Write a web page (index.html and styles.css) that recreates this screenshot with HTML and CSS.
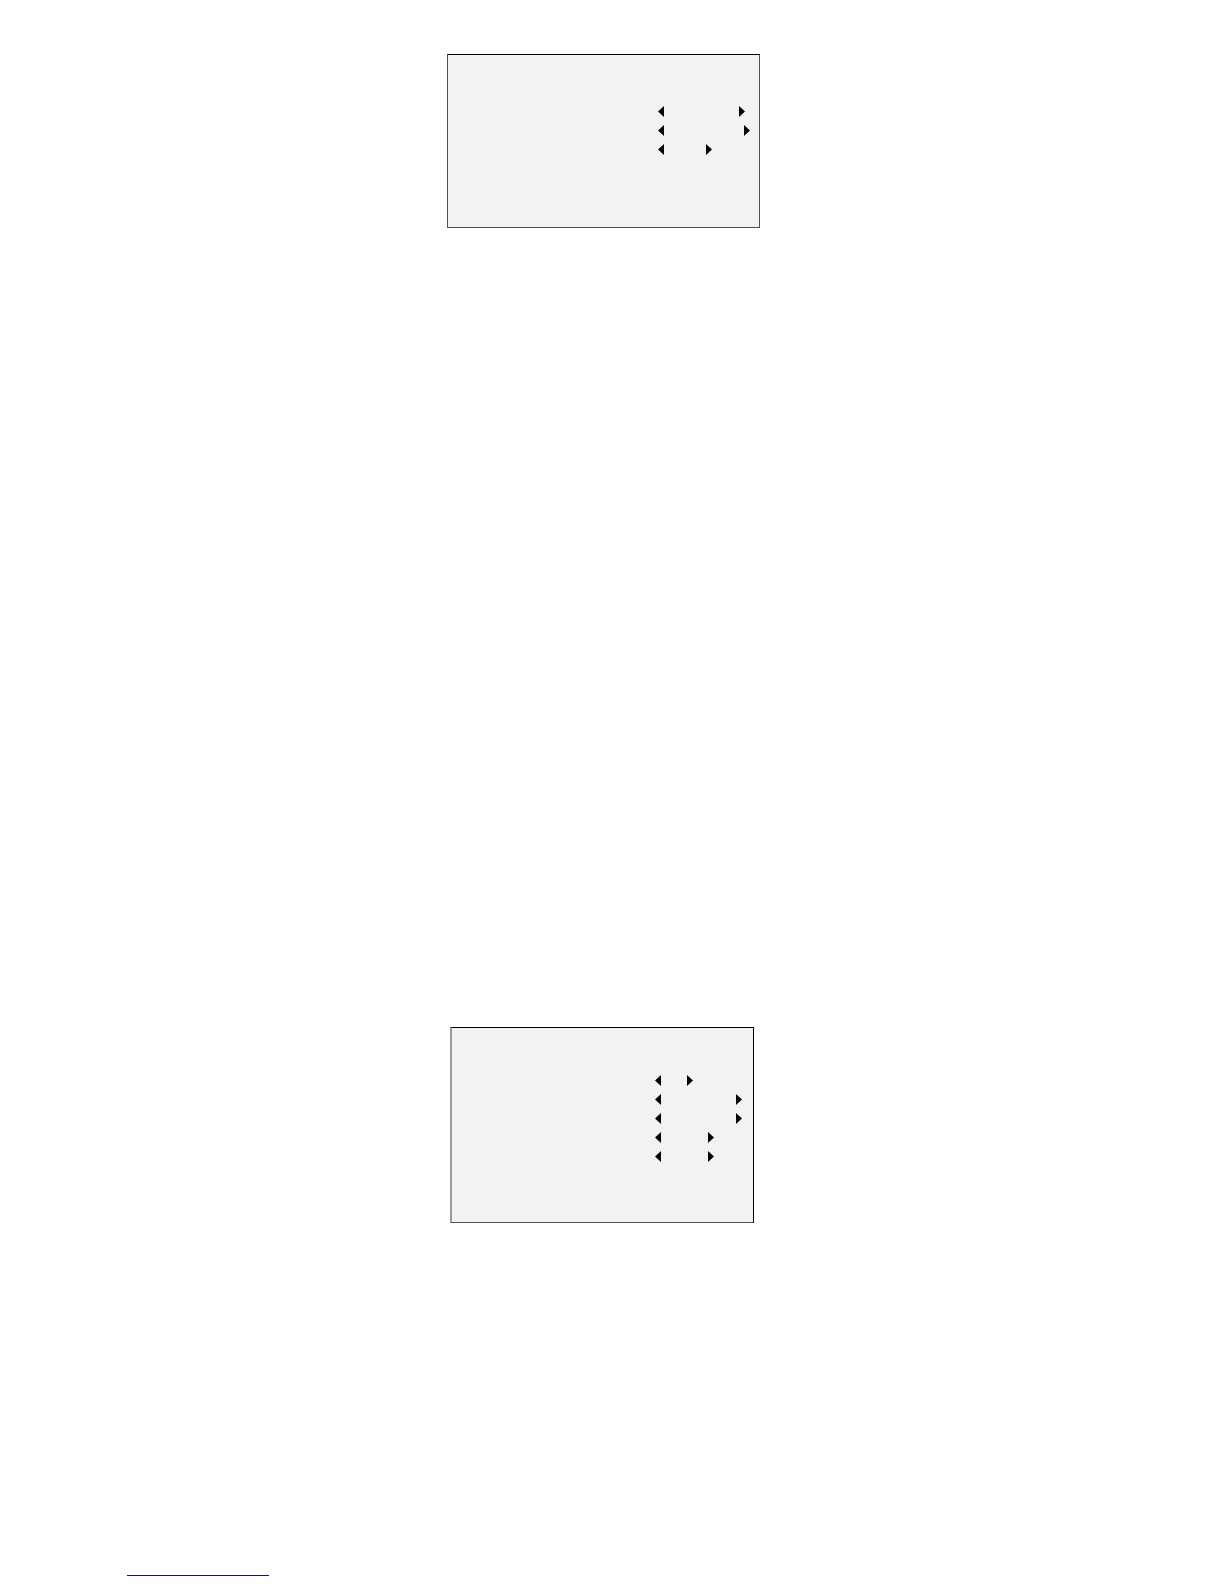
FILE: index.html
```
<!DOCTYPE html>
<html lang="en">
<head>
  <meta charset="UTF-8" />
  <meta name="viewport" content="width=device-width, initial-scale=1.0"/>
  <title>Menu</title>
  <link rel="stylesheet" href="styles.css">
</head>
<body>

  <main class="page">
    <section class="panel-row">
      <div class="panel panel-short">
        <div class="option option-long">
          <button type="button" class="arrow" aria-label="Previous"><svg viewBox="0 0 6 11"><path d="M6 0v11L0 5.5z"/></svg></button>
          <button type="button" class="arrow" aria-label="Next"><svg viewBox="0 0 6 11"><path d="M0 0v11l6-5.5z"/></svg></button>
        </div>
        <div class="option option-longest">
          <button type="button" class="arrow" aria-label="Previous"><svg viewBox="0 0 6 11"><path d="M6 0v11L0 5.5z"/></svg></button>
          <button type="button" class="arrow" aria-label="Next"><svg viewBox="0 0 6 11"><path d="M0 0v11l6-5.5z"/></svg></button>
        </div>
        <div class="option option-medium">
          <button type="button" class="arrow" aria-label="Previous"><svg viewBox="0 0 6 11"><path d="M6 0v11L0 5.5z"/></svg></button>
          <button type="button" class="arrow" aria-label="Next"><svg viewBox="0 0 6 11"><path d="M0 0v11l6-5.5z"/></svg></button>
        </div>
      </div>
    </section>

    <section class="panel-row panel-row-lower">
      <div class="panel panel-tall">
        <div class="option option-small">
          <button type="button" class="arrow" aria-label="Previous"><svg viewBox="0 0 6 11"><path d="M6 0v11L0 5.5z"/></svg></button>
          <button type="button" class="arrow" aria-label="Next"><svg viewBox="0 0 6 11"><path d="M0 0v11l6-5.5z"/></svg></button>
        </div>
        <div class="option option-long">
          <button type="button" class="arrow" aria-label="Previous"><svg viewBox="0 0 6 11"><path d="M6 0v11L0 5.5z"/></svg></button>
          <button type="button" class="arrow" aria-label="Next"><svg viewBox="0 0 6 11"><path d="M0 0v11l6-5.5z"/></svg></button>
        </div>
        <div class="option option-long">
          <button type="button" class="arrow" aria-label="Previous"><svg viewBox="0 0 6 11"><path d="M6 0v11L0 5.5z"/></svg></button>
          <button type="button" class="arrow" aria-label="Next"><svg viewBox="0 0 6 11"><path d="M0 0v11l6-5.5z"/></svg></button>
        </div>
        <div class="option option-wide">
          <button type="button" class="arrow" aria-label="Previous"><svg viewBox="0 0 6 11"><path d="M6 0v11L0 5.5z"/></svg></button>
          <button type="button" class="arrow" aria-label="Next"><svg viewBox="0 0 6 11"><path d="M0 0v11l6-5.5z"/></svg></button>
        </div>
        <div class="option option-wide">
          <button type="button" class="arrow" aria-label="Previous"><svg viewBox="0 0 6 11"><path d="M6 0v11L0 5.5z"/></svg></button>
          <button type="button" class="arrow" aria-label="Next"><svg viewBox="0 0 6 11"><path d="M0 0v11l6-5.5z"/></svg></button>
        </div>
      </div>
    </section>

    <a class="footer-link" href="#" aria-label="Website"></a>
  </main>

</body>
</html>
```
FILE: styles.css
```
* {
  margin: 0; padding: 0; box-sizing: border-box;
  font-family: "Liberation Sans", sans-serif;
}
body {
  background: #fff;
}
.page {
  display: flex;
  flex-direction: column;
  min-height: 100vh;
  padding: 54px 144px 8px 127px;
}
.panel-row {
  display: flex;
  justify-content: center;
}
.panel-row-lower {
  margin-top: 799px;
  padding-right: 3px;
}
.panel {
  display: flex;
  flex-direction: column;
  gap: 8px;
  width: 100%;
  background: #f2f2f2;
  border: 1px solid #505050;
  border-top-color: #000;
}
.panel-short {
  max-width: 313px;
  padding: 51px 0 72px 210px;
}
.panel-tall {
  max-width: 304px;
  padding: 47px 0 60px 203px;
  border-left: 2px solid #9b9b9b;
  border-right-color: #000;
}

/* one setting line: arrows on both sides of the value */
.option {
  display: flex;
  justify-content: space-between;
}
.option-small {
  width: 38px;
}
.option-medium {
  width: 54px;
}
.option-wide {
  width: 59px;
}
.option-long {
  width: 87px;
}
.option-longest {
  width: 92px;
}
.arrow {
  width: 6px;
  height: 11px;
  border: none;
  background: none;
  cursor: pointer;
}
.arrow svg {
  display: block;
  width: 6px;
  height: 11px;
  fill: #000;
}
.footer-link {
  width: 142px;
  margin-top: auto;
  border-bottom: 1px solid #11118c;
}
```
